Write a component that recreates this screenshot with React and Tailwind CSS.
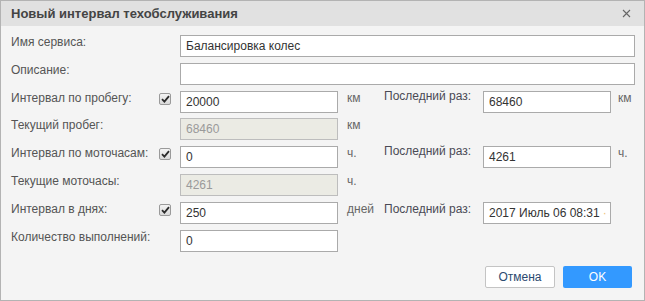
import React from "react";

const font = { fontFamily: '"Liberation Sans", Arial, sans-serif' };

function Check() {
  return (
    <div className="mt-[2px] flex h-[12px] w-[12px] items-center justify-center rounded-[2px] border border-[#9a9a9a] bg-gradient-to-b from-[#f4f4f4] to-[#d9d9d9]">
      <svg width="9" height="8" viewBox="0 0 9 8">
        <path d="M1 4.2 L3.4 6.6 L8 1.2" fill="none" stroke="#2b2b2b" strokeWidth="1.8" />
      </svg>
    </div>
  );
}

function Input({ value = "", w = "w-[158px]", disabled = false, tail }) {
  return (
    <div
      className={`${w} flex h-[22px] shrink-0 items-center overflow-hidden whitespace-nowrap border pl-[5px] text-[12px] leading-[14px] ${
        disabled
          ? "border-[#bdbdbd] bg-[#ebebe4] text-[#9a9a9a]"
          : "border-[#aaaaaa] bg-white text-[#333333]"
      }`}
    >
      {value}
      {tail ? <span className="pl-[3px] text-[#f0c27a]">{tail}</span> : null}
    </div>
  );
}

function Row({ label, check, value, disabled, unit, last, lastUnit, lastUp, tail }) {
  return (
    <div className="flex h-[22px] items-start">
      <div className="w-[158px] shrink-0 pl-[10px] text-[12px] leading-[14px] text-[#555555]">
        {label}
      </div>
      <div className="w-[21px] shrink-0">{check ? <Check /> : null}</div>
      <Input value={value} disabled={disabled} />
      {unit ? (
        <div className="w-[46px] shrink-0 pl-[9px] text-[12px] leading-[14px] text-[#666666]">
          {unit}
        </div>
      ) : null}
      {last !== undefined ? (
        <>
          <div
            className={`w-[99px] shrink-0 text-[12px] leading-[14px] text-[#4a4a55] ${
              lastUp ? "-mt-[2px]" : ""
            }`}
          >
            Последний раз:
          </div>
          <Input value={last} w="w-[128px]" tail={tail} />
          {lastUnit ? (
            <div className="pl-[7px] text-[12px] leading-[14px] text-[#666666]">{lastUnit}</div>
          ) : null}
        </>
      ) : null}
    </div>
  );
}

export default function App() {
  return (
    <div
      style={font}
      className="flex h-[301px] w-[645px] flex-col border border-[#b3b3b3] bg-[#f4f4f4]"
    >
      <div className="flex h-[25px] shrink-0 items-center justify-between bg-[#e1e1e1] pl-[10px] pr-[13px]">
        <div className="text-[13px] font-bold leading-[15px] text-[#444444]">
          Новый интервал техобслуживания
        </div>
        <svg width="9" height="9" viewBox="0 0 9 9">
          <path d="M1 1 L8 8 M8 1 L1 8" stroke="#666666" strokeWidth="1.1" />
        </svg>
      </div>
      <div className="flex flex-col gap-[5.8px] pt-[9px]">
        <div className="flex h-[22px] items-start">
          <div className="w-[179px] shrink-0 pl-[10px] text-[12px] leading-[14px] text-[#555555]">
            Имя сервиса:
          </div>
          <Input value="Балансировка колес" w="w-[455px]" />
        </div>
        <div className="flex h-[22px] items-start">
          <div className="w-[179px] shrink-0 pl-[10px] text-[12px] leading-[14px] text-[#555555]">
            Описание:
          </div>
          <Input value="" w="w-[455px]" />
        </div>
        <Row label="Интервал по пробегу:" check value="20000" unit="км" last="68460" lastUnit="км" lastUp />
        <Row label="Текущий пробег:" value="68460" disabled unit="км" />
        <Row label="Интервал по моточасам:" check value="0" unit="ч." last="4261" lastUnit="ч." lastUp />
        <Row label="Текущие моточасы:" value="4261" disabled unit="ч." />
        <Row label="Интервал в днях:" check value="250" unit="дней" last="2017 Июль 06 08:31" tail="·" />
        <Row label="Количество выполнений:" value="0" />
      </div>
      <div className="mt-[14.4px] flex justify-end gap-[8px] pr-[12px]">
        <button className="flex h-[22px] w-[70px] items-center justify-center rounded-[2px] border border-[#c4c4c4] bg-white text-[12px] text-[#2c4a70]">
          Отмена
        </button>
        <button className="flex h-[22px] w-[69px] items-center justify-center rounded-[2px] bg-[#3399ff] text-[12px] text-white">
          OK
        </button>
      </div>
    </div>
  );
}
